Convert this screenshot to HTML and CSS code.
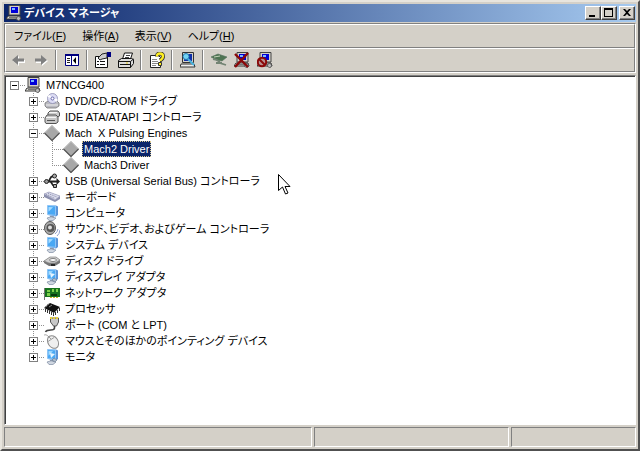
FILE: index.html
```html
<!DOCTYPE html>
<html lang="ja">
<head>
    <meta charset="UTF-8">
    <meta name="viewport" content="width=device-width, initial-scale=1.0">
    <title>デバイス マネージャ</title>
    <link rel="stylesheet" href="styles.css">
</head>
<body>
    <!-- アイコン定義 -->
    <svg class="defs" aria-hidden="true">
        <symbol id="i-computer" viewBox="0 0 16 16">
            <path d="M3 .5h11v9.500H3z" fill="#d4d0c8" stroke="#444"/>
            <path d="M5 2h7v6H5z" fill="#0000d8"/><path d="M6 3h3v2H6z" fill="#7ab8ff"/>
            <path d="M2 11h12l1 3H0z" fill="#e8e5dc" stroke="#333"/>
            <path d="M3 12.500h8" stroke="#777"/>
            <path d="M12 11l3 2-2 3-3-2z" fill="#bbb" stroke="#444" stroke-width=".7"/>
        </symbol>
        <symbol id="i-cd" viewBox="0 0 16 16">
            <path d="M1 10l3-2h9l2 2v3l-3 2H3l-2-2z" fill="#b9b9c0" stroke="#777" stroke-width=".8"/>
            <path d="M2 12h12" stroke="#eee"/>
            <circle cx="8.500" cy="5.500" r="5" fill="#dcdcf4" stroke="#8c8cb0" stroke-width=".8"/>
            <path d="M8.500 5.500L5 1.500 3.600 4zM8.500 5.500l4 3.500 1-3z" fill="#fff"/>
            <circle cx="8.500" cy="5.500" r="1.500" fill="#fff" stroke="#66a"/>
        </symbol>
        <symbol id="i-ide" viewBox="0 0 16 16">
            <path d="M4 4l2-2h8l1.500 2v3L13 8H4z" fill="#ccc" stroke="#555"/>
            <path d="M1 9l2-3h9l2 2v5l-2 1.500H2L1 13z" fill="#c8c8c8" stroke="#555"/>
            <path d="M2 8.500h10M5 3.500h8" stroke="#f6f6f6"/><path d="M3 11.500h8" stroke="#555"/>
        </symbol>
        <symbol id="i-diamond" viewBox="0 0 16 16">
            <path d="M8 0l8 8-8 8-8-8z" fill="#a8a8a8"/>
            <path d="M.5 8L8 .5 15.500 8" fill="none" stroke="#c4c4c4"/>
            <path d="M.5 8L8 15.500 15.500 8" fill="none" stroke="#555" stroke-width="1.200"/>
        </symbol>
        <symbol id="i-usb" viewBox="0 0 16 16">
            <path d="M1 8.500h13M3.500 8.500C6 8.500 6 3.500 8 3.500h3M6 8.500c2 0 2 4.500 4 4.500h2" fill="none" stroke="#222" stroke-width="1.800"/>
            <circle cx="2.500" cy="8.500" r="2" fill="#999" stroke="#222"/>
            <path d="M12.500 5l3.500 3.500-3.500 3.500z" fill="#222"/>
            <circle cx="10.500" cy="3" r="2" fill="#aaa" stroke="#222"/>
            <path d="M9.500 11.500h3v3h-3z" fill="#aaa" stroke="#222"/>
        </symbol>
        <symbol id="i-keyboard" viewBox="0 0 16 16">
            <path d="M0 5l5-2 11 4v3l-5 3L0 8z" fill="#8c90ae"/>
            <path d="M0 5l5-2 11 4-5 4z" fill="#dadcec" stroke="#9a9cb8" stroke-width=".6"/>
            <path d="M2 5.500l9 4M4 4.500l9 3.500" stroke="#8688aa" stroke-dasharray="1 1"/>
        </symbol>
        <symbol id="i-monitor" viewBox="0 0 16 16">
            <path d="M4 1l8-.5 2 1V10l-2 1.500L4 10z" fill="#5a93d8"/>
            <path d="M3.500 .500l8 .5v9.300L3.500 9.500z" fill="#49a8f4" stroke="#8ec4f6"/>
            <path d="M4.500 2l4.500.3-4.500 4.500z" fill="#a6dcff"/>
            <path d="M6 10.800l4 .5v2H6z" fill="#8795aa"/>
            <path d="M3 13l4-1.200 5 1.200-3 2.500H5z" fill="#cfd6e0" stroke="#7e8ca3" stroke-width=".7"/>
        </symbol>
        <symbol id="i-sound" viewBox="0 0 16 16">
            <ellipse cx="6" cy="7" rx="5.500" ry="6.500" fill="#aaa" stroke="#555"/>
            <circle cx="6.500" cy="7" r="4" fill="#555"/><circle cx="6" cy="6.500" r="2" fill="#ddd"/>
            <path d="M11 13q2.500-2 3-5M13 15q2.500-2 3-6" fill="none" stroke="#8f9fca"/>
        </symbol>
        <symbol id="i-disk" viewBox="0 0 16 16">
            <path d="M0 8l6-4h6l4 3v3l-5 3H5L0 10z" fill="#777"/>
            <path d="M0 8l6-4h6l4 3-5 3H5z" fill="#d2d2d2" stroke="#888" stroke-width=".7"/>
            <ellipse cx="9" cy="7" rx="3.500" ry="1.500" fill="#fff" stroke="#666" stroke-width=".8"/>
            <path d="M7 12h4" stroke="#111" stroke-width="1.500"/>
        </symbol>
        <symbol id="i-display" viewBox="0 0 16 16">
            <use href="#i-monitor"/>
            <path d="M6 4l5 1-4 4z" fill="#e6f4ff"/><path d="M10 9l3 2-2 2-3-2z" fill="#b0bccb" stroke="#66788f" stroke-width=".6"/>
        </symbol>
        <symbol id="i-network" viewBox="0 0 16 16">
            <path d="M.5 3v12" stroke="#777"/>
            <path d="M1 3h15v9H1z" fill="#16721e"/>
            <path d="M3 5h3v2H3zM8 4h2v3H8zM12 4h2v3h-2zM3 8h3v3H3z" fill="#7cd04a"/>
            <path d="M6 12.500h9" stroke="#c7b52a" stroke-dasharray="2 1"/><path d="M7 9h6v2H7z" fill="#063b0d"/>
        </symbol>
        <symbol id="i-cpu" viewBox="0 0 16 16">
            <path d="M0 7l6-5 10 4-6 6z" fill="#111"/>
            <path d="M1.500 8v3M3.500 9v3M5.500 10v3M7.500 11v3M9.500 12v3M11.500 11v3M13.500 9v3M15.500 7v3" stroke="#333"/>
            <path d="M1 6l2-1M3 4l2-1" stroke="#777"/><path d="M5 6l3-2" stroke="#888"/>
        </symbol>
        <symbol id="i-port" viewBox="0 0 16 16">
            <path d="M6.500 1h8v4l-2 4h-3l-3-4z" fill="#c8c8c8" stroke="#555"/>
            <path d="M6 1h9" stroke="#e4cc3c" stroke-width="2" stroke-dasharray="2 1"/>
            <path d="M10.500 9v2c0 4-7 0-9 4" fill="none" stroke="#444" stroke-width="1.600"/>
        </symbol>
        <symbol id="i-mouse" viewBox="0 0 16 16">
            <ellipse cx="9" cy="9" rx="5" ry="6.800" transform="rotate(-32 9 9)" fill="#efefef" stroke="#8a8a8a"/>
            <path d="M4 8.500l6-4M7 6L4 3" fill="none" stroke="#888" stroke-width=".8"/>
            <path d="M4 3Q2 1 0 2" fill="none" stroke="#aaa"/>
        </symbol>
        <symbol id="i-back" viewBox="0 0 16 16">
            <path d="M3 9l6-5v4h6v3H9v3z" fill="#fff"/>
            <path d="M2 8l6-5v3.500h6v3H8V13z" fill="#808080"/>
        </symbol>
        <symbol id="i-forward" viewBox="0 0 16 16">
            <path d="M15 9L9 4v4H3v3h6v3z" fill="#fff"/>
            <path d="M14 8L8 3v3.500H2v3h6V13z" fill="#808080"/>
        </symbol>
        <symbol id="i-pane" viewBox="0 0 16 16">
            <path d="M1.500 3.500h13v10h-13z" fill="#fff" stroke="#000080"/>
            <path d="M1 2h14v2H1zM7 3h1v11H7z" fill="#000080"/>
            <path d="M3 6.500h3M3 8.500h3M3 10.500h3" stroke="#222"/><path d="M12 5v7L9 8.500z" fill="#000"/>
        </symbol>
        <symbol id="i-props" viewBox="0 0 16 16">
            <path d="M.5 4.500h12v11H.5z" fill="#fff" stroke="#111"/>
            <path d="M2 9.500h2M5 9.500h5M2 12.500h2M5 12.500h5" stroke="#111"/>
            <path d="M3 6l4-4 5-1v5l-5 1-2 1z" fill="#ccc" stroke="#222"/><path d="M12 0h4v5h-4z" fill="#000080"/>
        </symbol>
        <symbol id="i-print" viewBox="0 0 16 16">
            <path d="M4.500 7l2-6h8l-2 6z" fill="#fff" stroke="#111"/><path d="M8 3.500h4M7 5.500h4" stroke="#444"/>
            <path d="M.5 8.500l3-2h10l2 1v4l-3 4H.5z" fill="#ddd" stroke="#111"/>
            <path d="M.5 9.500h12l3-2.500M12.500 9.500v6" fill="none" stroke="#111"/><path d="M2 12.500h10" stroke="#111"/><path d="M8 11h2" stroke="#e4cc20"/>
        </symbol>
        <symbol id="i-help" viewBox="0 0 16 16">
            <path d="M1.500 3.500h8l2 2v10h-10z" fill="#fff" stroke="#222"/>
            <path d="M3 7.500h5M3 9.500h6M3 11.500h6M3 13.500h4" stroke="#888"/>
            <path d="M8 4.500q0-3 3-3t3 3q0 2-3 4" fill="none" stroke="#333" stroke-width="4"/>
            <path d="M8 4.500q0-3 3-3t3 3q0 2-3 4" fill="none" stroke="#ffee20" stroke-width="2.400"/>
            <path d="M9.500 10.500h3v3h-3z" fill="#ffee20" stroke="#333"/>
        </symbol>
        <symbol id="i-scan" viewBox="0 0 16 16">
            <path d="M2.500 .500h11v10h-11z" fill="#d4d0c8" stroke="#333"/><path d="M4 2h8v7H4z" fill="#1030a8"/>
            <path d="M1 12h13l1 3H0z" fill="#eee" stroke="#333"/>
            <circle cx="6" cy="4.500" r="3" fill="#73d4f4" stroke="#237bb0"/><path d="M8 7l6 6" stroke="#48b4e0" stroke-width="2"/>
        </symbol>
        <symbol id="i-update" viewBox="0 0 16 16">
            <path d="M0 5l7-3 9 3-5 4-5-1z" fill="#4f7452" stroke="#54705a" stroke-width=".6"/>
            <path d="M2 7q6 1 7 4l6 2M5 11h6" fill="none" stroke="#748474" stroke-width="1.800"/>
            <path d="M3 5l6-1" stroke="#c4d4b8"/>
        </symbol>
        <symbol id="i-remove" viewBox="0 0 16 16">
            <use href="#i-computer"/><path d="M1 2l13 13M14 1L1 15" stroke="#8b0808" stroke-width="2.400"/>
        </symbol>
        <symbol id="i-disable" viewBox="0 0 16 16">
            <use href="#i-computer"/>
            <circle cx="5" cy="10" r="4.200" fill="#b89090" stroke="#8b0808" stroke-width="2"/><path d="M2 7l6 6" stroke="#8b0808" stroke-width="2"/>
        </symbol>
    </svg>

    <div class="window">
        <header class="title-bar">
            <svg class="icon"><use href="#i-computer"/></svg>
            <h1>デバイス マネージャ</h1>
            <button class="win-btn" aria-label="最小化"><svg viewBox="0 0 12 10"><path d="M2 7h6v2H2z"/></svg></button>
            <button class="win-btn" aria-label="最大化"><svg viewBox="0 0 12 10"><path d="M1 0h9v9H1zM2 2v6h7V2z" fill-rule="evenodd"/></svg></button>
            <button class="win-btn close" aria-label="閉じる"><svg viewBox="0 0 12 10"><path d="M2 1h2l2 2 2-2h2L7 4.500 10 8H8L6 6 4 8H2l3-3.500z"/></svg></button>
        </header>

        <div class="bars">
            <nav class="menu-bar">
                <button>ファイル(<u>F</u>)</button>
                <button>操作(<u>A</u>)</button>
                <button>表示(<u>V</u>)</button>
                <button>ヘルプ(<u>H</u>)</button>
            </nav>
            <div class="tool-bar">
                <button aria-label="戻る" disabled><svg class="icon"><use href="#i-back"/></svg></button>
                <button aria-label="進む" disabled><svg class="icon"><use href="#i-forward"/></svg></button>
                <span class="sep"></span>
                <button aria-label="ツリーの表示"><svg class="icon"><use href="#i-pane"/></svg></button>
                <span class="sep"></span>
                <button aria-label="プロパティ"><svg class="icon"><use href="#i-props"/></svg></button>
                <button aria-label="印刷"><svg class="icon"><use href="#i-print"/></svg></button>
                <span class="sep"></span>
                <button aria-label="ヘルプ"><svg class="icon"><use href="#i-help"/></svg></button>
                <span class="sep"></span>
                <button aria-label="ハードウェア変更のスキャン"><svg class="icon"><use href="#i-scan"/></svg></button>
                <span class="sep"></span>
                <button aria-label="ドライバの更新"><svg class="icon"><use href="#i-update"/></svg></button>
                <button aria-label="削除"><svg class="icon"><use href="#i-remove"/></svg></button>
                <button aria-label="無効"><svg class="icon"><use href="#i-disable"/></svg></button>
            </div>
        </div>

        <main class="tree-view">
            <ul class="tree root">
                <li>
                    <div class="row"><span class="branch"><button class="toggle open" aria-label="折りたたむ"></button></span><svg class="icon"><use href="#i-computer"/></svg><span class="label">M7NCG400</span></div>
                    <ul class="tree">
                        <li><div class="row"><span class="branch"><button class="toggle" aria-label="展開"></button></span><svg class="icon"><use href="#i-cd"/></svg><span class="label">DVD/CD-ROM ドライブ</span></div></li>
                        <li><div class="row"><span class="branch"><button class="toggle" aria-label="展開"></button></span><svg class="icon"><use href="#i-ide"/></svg><span class="label">IDE ATA/ATAPI コントローラ</span></div></li>
                        <li>
                            <div class="row"><span class="branch"><button class="toggle open" aria-label="折りたたむ"></button></span><svg class="icon"><use href="#i-diamond"/></svg><span class="label">Mach&nbsp; X Pulsing Engines</span></div>
                            <ul class="tree">
                                <li><div class="row"><span class="branch"></span><svg class="icon"><use href="#i-diamond"/></svg><span class="label selected">Mach2 Driver</span></div></li>
                                <li><div class="row"><span class="branch"></span><svg class="icon"><use href="#i-diamond"/></svg><span class="label">Mach3 Driver</span></div></li>
                            </ul>
                        </li>
                        <li><div class="row"><span class="branch"><button class="toggle" aria-label="展開"></button></span><svg class="icon"><use href="#i-usb"/></svg><span class="label">USB (Universal Serial Bus) コントローラ</span></div></li>
                        <li><div class="row"><span class="branch"><button class="toggle" aria-label="展開"></button></span><svg class="icon"><use href="#i-keyboard"/></svg><span class="label">キーボード</span></div></li>
                        <li><div class="row"><span class="branch"><button class="toggle" aria-label="展開"></button></span><svg class="icon"><use href="#i-monitor"/></svg><span class="label">コンピュータ</span></div></li>
                        <li><div class="row"><span class="branch"><button class="toggle" aria-label="展開"></button></span><svg class="icon"><use href="#i-sound"/></svg><span class="label">サウンド、ビデオ、およびゲーム コントローラ</span></div></li>
                        <li><div class="row"><span class="branch"><button class="toggle" aria-label="展開"></button></span><svg class="icon"><use href="#i-monitor"/></svg><span class="label">システム デバイス</span></div></li>
                        <li><div class="row"><span class="branch"><button class="toggle" aria-label="展開"></button></span><svg class="icon"><use href="#i-disk"/></svg><span class="label">ディスク ドライブ</span></div></li>
                        <li><div class="row"><span class="branch"><button class="toggle" aria-label="展開"></button></span><svg class="icon"><use href="#i-display"/></svg><span class="label">ディスプレイ アダプタ</span></div></li>
                        <li><div class="row"><span class="branch"><button class="toggle" aria-label="展開"></button></span><svg class="icon"><use href="#i-network"/></svg><span class="label">ネットワーク アダプタ</span></div></li>
                        <li><div class="row"><span class="branch"><button class="toggle" aria-label="展開"></button></span><svg class="icon"><use href="#i-cpu"/></svg><span class="label">プロセッサ</span></div></li>
                        <li><div class="row"><span class="branch"><button class="toggle" aria-label="展開"></button></span><svg class="icon"><use href="#i-port"/></svg><span class="label">ポート (COM と LPT)</span></div></li>
                        <li><div class="row"><span class="branch"><button class="toggle" aria-label="展開"></button></span><svg class="icon"><use href="#i-mouse"/></svg><span class="label">マウスとそのほかのポインティング デバイス</span></div></li>
                        <li><div class="row"><span class="branch"><button class="toggle" aria-label="展開"></button></span><svg class="icon"><use href="#i-display"/></svg><span class="label">モニタ</span></div></li>
                    </ul>
                </li>
            </ul>
            <svg class="cursor" viewBox="0 0 13 21"><path d="M.5.5v16l4-3.500 3 7 2.500-1-3-6.500h5z" fill="#fff" stroke="#000"/></svg>
        </main>

        <footer class="status-bar">
            <div class="pane"></div>
            <div class="pane"></div>
            <div class="pane"></div>
        </footer>
    </div>
</body>
</html>
```
FILE: styles.css
```css
* {
    margin: 0;
    padding: 0;
    box-sizing: border-box;
}

body {
    font-family: "Liberation Sans", "Noto Sans CJK JP", sans-serif;
    font-size: 11px;
    font-feature-settings: "palt";
    line-height: 16px;
    color: #000;
    background: #d4d0c8;
}

button {
    font: inherit;
    font-feature-settings: inherit;
    color: inherit;
    background: none;
    border: none;
}

.defs {
    display: none;
}

.icon {
    width: 16px;
    height: 16px;
    flex: none;
}

.window {
    display: flex;
    flex-direction: column;
    min-height: 100vh;
    padding: 2px;
    background: #d4d0c8;
    border: 2px solid;
    border-color: #e8e5de #505050 #505050 #e8e5de;
}

/* タイトルバー */
.title-bar {
    display: flex;
    align-items: center;
    height: 18px;
    padding: 0 1px 0 2px;
    color: #fff;
    background: linear-gradient(90deg, #0a246a, #a6caf0);
}

.title-bar h1 {
    flex: 1;
    margin-left: 2px;
    font-size: 11px;
    font-weight: bold;
}

.win-btn {
    width: 16px;
    height: 14px;
    background: #d4d0c8;
    border: 1px solid;
    border-color: #fff #404040 #404040 #fff;
    box-shadow: inset -1px -1px #808080;
}

.win-btn svg {
    display: block;
    width: 12px;
    height: 10px;
    margin: 1px;
}

.win-btn.close {
    margin-left: 2px;
}

/* メニューとツールバー */
.bars {
    margin-top: 1px;
    border: 1px solid;
    border-color: #808080 #fff #fff #808080;
}

.menu-bar,
.tool-bar {
    display: flex;
    align-items: center;
    height: 24px;
    border: 1px solid;
    border-color: #fff #808080 #808080 #fff;
}

.menu-bar button {
    padding: 0 8px;
}

.tool-bar button {
    display: flex;
    align-items: center;
    justify-content: center;
    width: 23px;
    height: 22px;
}

.sep {
    width: 2px;
    height: 20px;
    margin: 0 3px;
    border-left: 1px solid #808080;
    border-right: 1px solid #fff;
}

/* ツリー */
.tree-view {
    position: relative;
    flex: 1;
    margin-top: 2px;
    padding: 1px;
    background: #fff;
    border: 1px solid;
    border-color: #808080 #fff #fff #808080;
    box-shadow: inset 1px 1px #404040;
}

.tree {
    list-style: none;
    padding-left: 19px;
}

.tree.root {
    padding-left: 1px;
}

.tree li {
    background: repeating-linear-gradient(#909090 0 1px, transparent 1px 2px) 7px 0 / 1px 100% no-repeat;
}

.tree li:last-child {
    background-size: 1px 8px;
}

.tree.root > li {
    background: none;
}

.row {
    display: flex;
    align-items: center;
    height: 16px;
}

.branch {
    display: flex;
    align-items: center;
    width: 18px;
    height: 16px;
    padding-left: 3px;
    background: repeating-linear-gradient(90deg, #909090 0 1px, transparent 1px 2px) 7px 8px / 11px 1px no-repeat;
}

.toggle {
    width: 9px;
    height: 9px;
    border: 1px solid #808080;
    background:
        linear-gradient(#000, #000) center / 5px 1px no-repeat,
        linear-gradient(#000, #000) center / 1px 5px no-repeat,
        #fff;
}

.toggle.open {
    background:
        linear-gradient(#000, #000) center / 5px 1px no-repeat,
        #fff;
}

.label {
    margin-left: 3px;
    padding: 0 2px;
    white-space: nowrap;
}

.label.selected {
    color: #fff;
    background: #0a246a;
    outline: 1px dotted #d8c890;
    outline-offset: -1px;
}

.cursor {
    position: absolute;
    left: 273px;
    top: 98px;
    width: 13px;
    height: 21px;
}

/* ステータスバー */
.status-bar {
    display: grid;
    grid-template-columns: 308fr 195fr 125fr;
    gap: 2px;
    height: 20px;
    margin-top: 2px;
}

.pane {
    border: 1px solid;
    border-color: #808080 #fff #fff #808080;
}
```
